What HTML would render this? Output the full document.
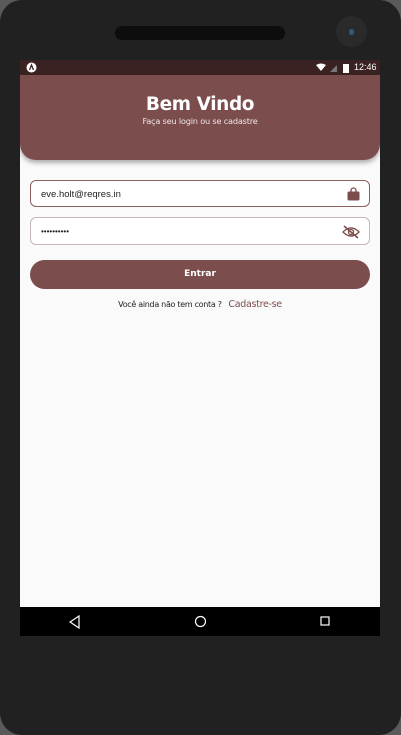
<!DOCTYPE html>
<html><head><meta charset="utf-8"><style>
*{margin:0;padding:0;box-sizing:border-box}
body{width:401px;height:735px;background:#5a5a5a;overflow:hidden;font-family:"DejaVu Sans","Liberation Sans",sans-serif}
.frame{position:absolute;left:0;top:0;width:401px;height:735px;background:#212121;border-radius:22px}
.speaker{position:absolute;left:115px;top:26px;width:170px;height:14px;background:#0d0d0d;border-radius:7px}
.cam{position:absolute;left:336px;top:16px;width:31px;height:31px;border-radius:50%;background:#2a2a2a}
.cam i{position:absolute;left:13px;top:13px;width:5px;height:6px;border-radius:50%;background:#3a5a7a}
.screen{position:absolute;left:20px;top:60px;width:360px;height:576px;background:#fafafa;overflow:hidden}
.status{position:absolute;left:0;top:0;width:360px;height:15px;background:#3b2222;color:#fff;font-size:9px}
.header{position:absolute;left:0;top:15px;width:360px;height:85px;background:#7b4d4d;border-radius:0 0 16px 16px;box-shadow:0 3px 5px rgba(0,0,0,.3);text-align:center;color:#fff}
.header h1{font-size:18.5px;letter-spacing:-0.4px;font-weight:bold;margin-top:18px;line-height:23px}
.header p{font-size:8.2px;letter-spacing:-0.2px;line-height:10px;color:#f0e6e6}
.inp{position:absolute;left:10px;width:340px;background:#fff;border-radius:6px;font-family:"Liberation Sans",sans-serif;font-size:9.5px;color:#222;padding-left:10px}
.btn{position:absolute;left:10px;top:200px;width:340px;height:29px;background:#7b4d4d;border-radius:15px;color:#fff;font-size:9px;font-weight:bold;text-align:center;line-height:29px}
.nav{position:absolute;left:0;top:547px;width:360px;height:29px;background:#000}
</style></head><body>
<div class="frame"></div>
<div class="speaker"></div>
<div class="cam"><i></i></div>
<div class="screen">
 <div class="status">
  <svg style="position:absolute;left:6px;top:2px" width="11" height="11"><circle cx="5.5" cy="5.5" r="5" fill="#fff"/><path d="M3.5 8L5.5 3L7.5 8" stroke="#3b2222" stroke-width="1.3" fill="none"/></svg>
  <svg style="position:absolute;left:296px;top:3px" width="40" height="10"><path d="M0 2Q5-1 10 2L5 8Z" fill="#fff"/><path d="M14 9L21 2V9Z" fill="#777"/><rect x="27" y="1" width="6" height="9" fill="#fff"/></svg>
  <span style="position:absolute;left:334px;top:2px;font-family:'Liberation Sans',sans-serif;font-size:9px">12:46</span>
 </div>
 <div class="header"><h1>Bem Vindo</h1><p>Faça seu login ou se cadastre</p></div>
 <div class="inp" style="top:120px;height:27px;line-height:27px;border:1px solid #8a6060">eve.holt@reqres.in
  <svg style="position:absolute;right:9px;top:6px" width="13" height="14"><path d="M4 5V3.5a2.5 2.5 0 0 1 5 0V5" stroke="#7b4d4d" stroke-width="1.3" fill="none"/><rect x="0.5" y="4.5" width="12" height="9" rx="1.5" fill="#7b4d4d"/></svg>
 </div>
 <div class="inp" style="top:157px;height:28px;line-height:28px;border:1px solid #c9b6b6;font-size:8px">••••••••••
  <svg style="position:absolute;right:9px;top:7px" width="18" height="14"><path d="M1 7Q9-1 17 7Q9 15 1 7Z" stroke="#7b4d4d" stroke-width="1.3" fill="none"/><circle cx="9" cy="7" r="2.5" stroke="#7b4d4d" stroke-width="1.3" fill="none"/><path d="M2 1L16 13" stroke="#7b4d4d" stroke-width="1.5"/></svg>
 </div>
 <div class="btn">Entrar</div>
 <div style="position:absolute;left:0;top:239px;width:360px;text-align:center;font-size:8px;letter-spacing:-0.3px;color:#222">Você ainda não tem conta ? &nbsp;&nbsp;<span style="color:#7b4d4d;font-size:9.5px;letter-spacing:-0.3px">Cadastre-se</span></div>
 <div class="nav">
  <svg style="position:absolute;left:49px;top:8px" width="12" height="14"><path d="M10 1L1 7L10 13Z" stroke="#fff" stroke-width="1.2" fill="none"/></svg>
  <svg style="position:absolute;left:174px;top:8px" width="13" height="13"><circle cx="6.5" cy="6.5" r="5" stroke="#fff" stroke-width="1.2" fill="none"/></svg>
  <svg style="position:absolute;left:300px;top:9px" width="11" height="11"><rect x="1" y="1" width="8" height="8" stroke="#fff" stroke-width="1.2" fill="none"/></svg>
 </div>
</div>
</body></html>
